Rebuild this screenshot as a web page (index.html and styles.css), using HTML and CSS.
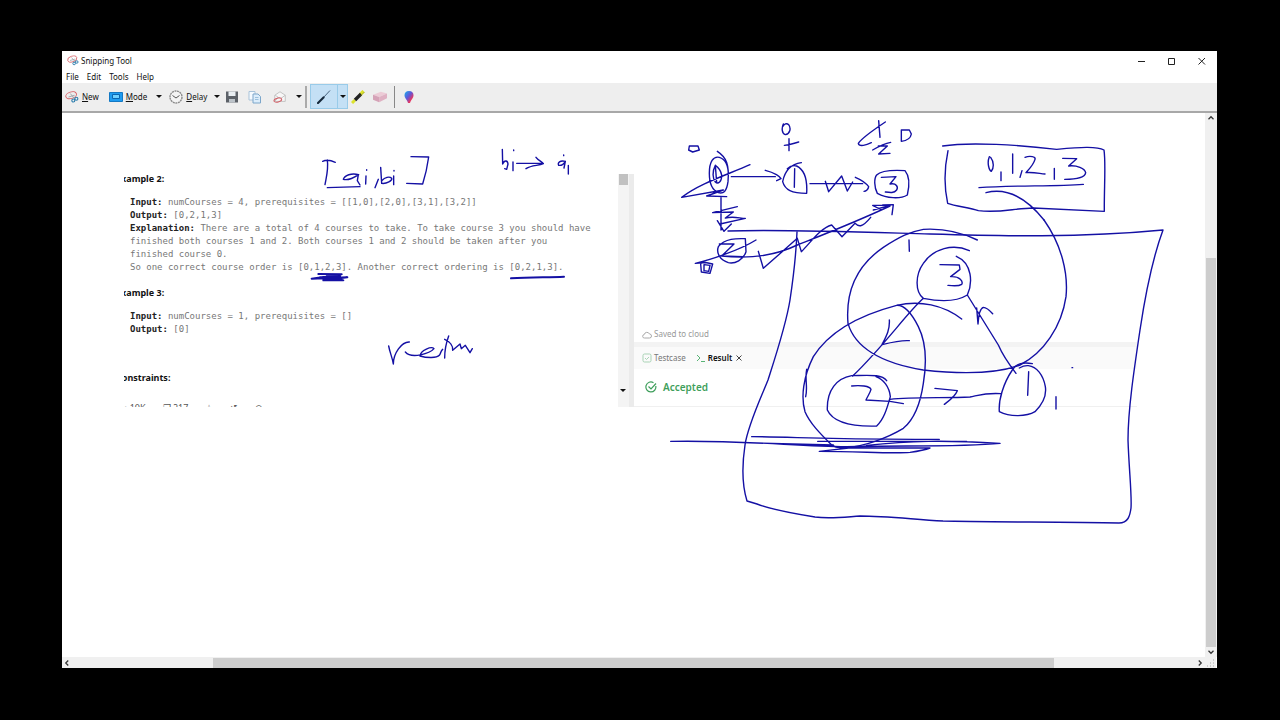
FILE: index.html
```html
<!DOCTYPE html>
<html lang="en">
<head>
<meta charset="utf-8">
<title>Snipping Tool</title>
<link rel="stylesheet" href="styles.css">
</head>
<body>
<svg class="defs" aria-hidden="true">
  <symbol id="scissors" viewBox="0 0 16 14">
    <ellipse cx="7" cy="5" rx="6.3" ry="3.8" transform="rotate(-18 7 5)" fill="none" stroke="#d8646a" stroke-width="1.1"/>
    <path d="M4 7l7-2M6 3l5 6" stroke="#9aa0a6" stroke-width="1" fill="none"/>
    <circle cx="9.500" cy="11" r="1.700" fill="none" stroke="#2f7fae" stroke-width="1.300"/>
    <circle cx="13" cy="9" r="1.700" fill="none" stroke="#2f7fae" stroke-width="1.300"/>
  </symbol>
</svg>
<div class="window">
  <header class="titlebar">
    <svg class="app-icon" viewBox="0 0 16 14"><use href="#scissors"/></svg>
    <h1 class="title">Snipping Tool</h1>
    <div class="window-controls">
      <button class="control" aria-label="Minimize"><svg viewBox="0 0 8 8"><path d="M0 4.500h7"/></svg></button>
      <button class="control" aria-label="Maximize"><svg viewBox="0 0 8 8"><path d="M.5 1.500h6v6h-6z"/></svg></button>
      <button class="control" aria-label="Close"><svg viewBox="0 0 8 8"><path d="M.5 1l6.500 6.500M7 1L.5 7.500"/></svg></button>
    </div>
  </header>
  <nav class="menubar" aria-label="Menu">
    <button class="menu">File</button><button class="menu">Edit</button><button class="menu">Tools</button><button class="menu">Help</button>
  </nav>
  <div class="toolbar" role="toolbar" aria-label="Tools">
    <button class="tool new"><svg class="icon" viewBox="0 0 16 14"><use href="#scissors"/></svg><span><u>N</u>ew</span></button>
    <button class="tool mode"><svg class="icon" viewBox="0 0 14 12"><path fill="#1e9bf0" stroke="#1479c4" d="M.5 1.500h13v9H.5z"/><path fill="#6fd0ff" stroke="#0b66b0" d="M3.500 3.500h7v4h-7z"/></svg><span><u>M</u>ode</span><i class="caret"></i></button>
    <button class="tool delay"><svg class="icon" viewBox="0 0 14 14"><circle cx="7" cy="7" r="6" fill="#f4f4f4" stroke="#8b8b8b" stroke-width="1.400" stroke-dasharray="2 .6"/><path d="M3.500 5.500L7 8l3.500-2.500" fill="none" stroke="#555"/></svg><span><u>D</u>elay</span><i class="caret"></i></button>
    <button class="tool save" aria-label="Save"><svg class="icon" viewBox="0 0 14 14"><path d="M1 1.500h12v11H1z" fill="#5c6168"/><path d="M3.500 1.500h7v4.500h-7z" fill="#e9eef2"/><path d="M4 9h6v3.500H4z" fill="#bcc3c9"/></svg></button>
    <button class="tool copy" aria-label="Copy"><svg class="icon" viewBox="0 0 14 14"><path d="M1 1.500h6v8.500H1z" fill="#f5faff" stroke="#a9c3da"/><path d="M5 4h5l2.500 2.500V13H5z" fill="#dcedfb" stroke="#7ca6ca"/><path d="M7 7.500h3.500M7 9.500h3.500" stroke="#9cc0dd"/></svg></button>
    <button class="tool send" aria-label="Send snip"><svg class="icon" viewBox="0 0 16 14"><path d="M2 5l6-4 6 4v7H2z" fill="#f7f7f7" stroke="#bbb"/><path d="M2.500 5l6 4L14 5M2 12l4-5" fill="none" stroke="#bbb"/><ellipse cx="5.500" cy="10.500" rx="4.500" ry="2.200" transform="rotate(-15 5.500 10.500)" fill="none" stroke="#d55e66" stroke-width="1.100"/></svg><i class="caret"></i></button>
    <span class="divider"></span>
    <div class="pen-group">
      <button class="pen" aria-label="Pen" aria-pressed="true"><svg class="icon" viewBox="0 0 14 14"><path d="M13 .5L6 8" stroke="#47627c" fill="none"/><path d="M6.500 7.500L1 13" stroke="#16283a" stroke-width="2.200" stroke-linecap="round"/></svg></button>
      <button class="pen-more" aria-label="Pen options"><i class="caret"></i></button>
    </div>
    <button class="tool marker" aria-label="Highlighter"><svg class="icon" viewBox="0 0 14 14"><path d="M12.500 1L9 4.500M4 10l-3 3" stroke="#dce22d" stroke-width="3"/><path d="M10 4L4 10" stroke="#222" stroke-width="3.400"/><path d="M13.500 2L10 5.500" stroke="#a4ab16"/></svg></button>
    <button class="tool eraser" aria-label="Eraser"><svg class="icon" viewBox="0 0 16 14"><path d="M0 4.500L9 1l7 2-9 4z" fill="#eccbd6"/><path d="M0 4.500L7 7v6L0 10z" fill="#d5a2b7"/><path d="M7 7l9-4v5.500L7 13z" fill="#dfb1c3"/></svg></button>
    <span class="divider thin"></span>
    <button class="tool paint" aria-label="Edit with Paint 3D"><svg class="icon" viewBox="0 0 10 14"><defs><linearGradient id="drop" x1="0" y1="0" x2="1" y2="1"><stop offset="0" stop-color="#12b3ee"/><stop offset=".45" stop-color="#6455d8"/><stop offset=".75" stop-color="#ed3659"/><stop offset="1" stop-color="#a646c4"/></linearGradient></defs><path d="M5 1C2 1 .5 3 .5 5.200.5 8 3 9.500 4 13h2c1-3.500 3.500-5 3.500-7.800C9.500 3 8 1 5 1z" fill="url(#drop)"/></svg></button>
  </div>
  <main class="workspace">
    <div class="canvas">
      <div class="snip">
        <section class="problem">
          <h2>Example 2:</h2>
          <pre class="sample"><b>Input:</b> numCourses = 4, prerequisites = [[1,0],[2,0],[3,1],[3,2]]
<b>Output:</b> [0,2,1,3]
<b>Explanation:</b> There are a total of 4 courses to take. To take course 3 you should have
finished both courses 1 and 2. Both courses 1 and 2 should be taken after you
finished course 0.
So one correct course order is [0,1,2,3]. Another correct ordering is [0,2,1,3].</pre>
          <h2 class="third">Example 3:</h2>
          <pre class="sample"><b>Input:</b> numCourses = 1, prerequisites = []
<b>Output:</b> [0]</pre>
          <h2 class="constraints">Constraints:</h2>
          <div class="stats"><span>• 10K</span><span>❐ 217</span><span>☆</span><span>↺</span><span>⊙</span></div>
        </section>
        <div class="snip-scroll"><span class="snip-thumb"></span><i class="caret"></i></div>
        <section class="judge">
          <div class="editor"><svg class="small-icon" viewBox="0 0 10 10"><path d="M2.500 8h5a2 2 0 0 0 0-4 2.800 2.800 0 0 0-5.300.6A1.700 1.700 0 0 0 2.500 8z" fill="none" stroke="#aaa"/></svg><span>Saved to cloud</span></div>
          <div class="results">
            <div class="tabs">
              <button class="tab"><svg class="small-icon" viewBox="0 0 10 10"><rect x="1" y="1" width="8" height="8" rx="1.500" fill="none" stroke="#a9d3b5"/><path d="M3 5l1.500 1.500L7 4" fill="none" stroke="#a9d3b5"/></svg>Testcase</button>
              <button class="tab active"><svg class="small-icon" viewBox="0 0 10 10"><path d="M1 2l3 3-3 3M5 8.500h4" fill="none" stroke="#58b475"/></svg>Result</button>
              <button class="tab-close" aria-label="Close result"><svg viewBox="0 0 6 6"><path d="M.5.5l5 5M5.500.5l-5 5" stroke="#444" fill="none"/></svg></button>
            </div>
            <div class="verdict"><svg viewBox="0 0 12 12"><path d="M10.800 5a5 5 0 1 1-2.300-3.300M3.500 5.500L6 8l5-5.500" fill="none" stroke="#3f9f5c" stroke-width="1.200"/></svg><strong>Accepted</strong></div>
          </div>
        </section>
      </div>
      <svg class="ink" viewBox="62 113 1144 545" aria-label="Pen drawing">
        <g class="large-frame"><path d="M728 231C780 229 860 232 930 234C1000 236 1080 238 1163 230C1150 265 1143 310 1140 330C1134 370 1128 410 1128 440C1129 470 1132 495 1131 508C1130 516 1128 523 1119 523C1060 522 980 522 943 521C910 519 885 516 860 516C845 517 830 519 815 517C790 513 770 509 757 504L747 501C742 485 742 465 745 445C748 425 760 400 768 380C776 355 786 325 790 300C793 280 796 255 797 232"/></g>
        <g transform="translate(110 140) scale(.333333)">
          <path d="M638 64C650 58 665 62 676 67M652 60C656 90 648 115 645 134M652 143L750 140M746 104C724 98 704 106 700 118C715 122 735 112 745 104L742 122L750 135M768 108L767 132M770 89v2M805 118L795 143M812 82L815 130C830 132 848 122 845 115C838 108 825 112 815 122M851 108V134M852 91v2M903 50L956 51C952 80 945 110 938 132L890 130"/>
          <path class="heavy" d="M625 402L695 403L605 416L712 412L640 421L700 421L650 405L690 408L630 412"/>
        </g>
        <g transform="translate(400 140) scale(.333333)">
          <path d="M307 28L308 72C314 58 323 62 324 72L320 88L314 86M339 66V92M341 30v2M350 70H430M408 52C415 62 428 66 430 71C415 78 395 74 378 86M496 64C480 60 472 68 476 76C486 77 492 72 496 64L492 84M505 76V102M491 45v2"/>
          <path class="heavy" d="M333 415C390 412 440 412 492 410"/>
        </g>
        <g transform="translate(110 270) scale(.333333)"><path d="M836 228C840 250 848 265 850 282C850 250 875 215 898 216M886 246C905 268 960 250 972 236C965 228 932 240 930 258C950 264 980 265 988 256C994 248 992 242 998 238M1016 198C1008 220 1004 240 1004 264M1004 208C1020 215 1030 228 1028 241L1050 222L1054 236L1066 226L1080 248L1087 236"/></g>
        <g transform="translate(660 110) scale(.333333)">
          <path d="M88 108L114 108L118 120L98 126L86 120ZM172 124C200 142 208 165 204 215C200 245 190 252 175 248C155 240 148 220 148 190C148 155 160 138 178 142C198 148 205 165 205 195M166 166C156 185 158 205 166 216C174 224 186 215 185 195C182 180 175 172 166 166L170 218M270 164C200 195 120 220 65 262L190 240L140 258L200 260M183 260V360M172 332L192 364L214 342M232 290L158 308L220 306L196 324C220 318 240 325 256 325L180 342"/>
          <path d="M214 200H346M316 181C345 188 360 200 363 206L350 212M424 158C395 162 375 180 368 215C375 240 395 250 440 250C442 215 435 180 410 168C400 165 390 168 382 176M404 176L403 232M370 42C364 55 366 72 376 74C390 72 394 55 386 44C380 38 372 42 368 50M373 106C390 106 405 98 416 96M387 86V122"/>
          <path d="M450 221H608M496 214L506 245L545 198L562 243L578 216M586 202C605 210 620 222 626 230C625 238 618 244 612 244M650 195C665 180 700 180 735 182C750 200 748 230 742 255C720 268 680 265 652 250C642 230 642 205 650 195M664 202L708 200L690 222C710 218 715 232 710 240C702 250 690 248 676 246M676 36C640 60 605 85 595 100C597 112 620 105 634 98M656 32L660 82M638 120C655 110 675 100 692 97M655 108H682L656 132L690 130M724 60V94C740 92 752 85 754 72L748 60Z"/>
          <path d="M185 438C290 450 360 430 412 405C500 370 590 335 690 288M295 424L310 475L412 385L424 425C450 400 480 355 515 345L546 380L585 340C595 350 605 355 632 322M640 300L690 286H638L665 300M668 285L700 284L696 314M175 410C195 385 230 385 256 386L258 425C250 450 225 462 205 458C180 450 168 430 175 410M178 402L222 402L185 438L250 440M288 390C240 420 150 450 106 460L140 458M122 462L124 486L150 490L158 462L130 456ZM132 464L150 466L146 484L132 482Z"/>
        </g>
        <g transform="translate(920 130) scale(.333333)"><path d="M68 48C150 35 300 45 410 58C480 52 530 48 552 60C558 100 552 180 553 244L340 234C280 235 240 250 175 242C150 232 110 230 83 220C72 170 74 110 84 62M208 80C200 100 208 122 214 124C222 115 222 95 212 82M243 126V152M278 72V130M306 122L300 142M315 82C330 76 348 80 345 88C340 105 325 120 318 128C340 126 355 130 375 132M403 115V148M428 85L470 86L446 108C470 105 495 115 497 128C495 145 460 148 434 148M177 173C280 165 400 170 490 163M198 188C260 172 320 205 372 270"/></g>
        <g transform="translate(780 220) scale(.333333)">
          <path d="M792 0C845 75 865 160 858 230C845 320 790 400 720 435C640 465 520 460 430 450C340 435 230 400 204 310C195 200 240 130 310 82C360 50 390 35 430 28C480 25 540 35 592 60M387 60L388 94M568 92C520 70 460 85 430 130C405 165 405 215 430 235C480 245 530 245 562 225C578 190 578 130 529 109M480 134L538 135L540 148L512 170C540 168 550 185 545 193C535 200 520 198 504 196M430 235C380 280 310 380 218 468M328 300C330 330 318 350 306 374C330 368 360 360 388 362M562 225L655 375C670 410 685 430 708 460M590 264L594 312C596 280 600 265 610 262C620 262 630 272 638 281"/>
          <path d="M545 297C490 255 420 240 350 256C240 285 150 330 100 410C70 470 62 530 75 575C90 610 120 640 155 675C165 682 180 685 200 682C250 680 320 655 370 625C400 600 420 560 430 490C440 430 440 370 415 320C395 280 375 255 350 256M80 448C74 480 84 500 77 530M320 482C305 462 270 466 215 467C170 475 140 510 142 570C160 610 220 620 290 618C310 600 320 570 331 530C328 500 310 478 288 470M215 498C240 495 270 498 273 508C270 520 262 530 258 540L330 544L370 551M330 538C400 530 500 535 570 531C600 525 620 518 662 521M465 505L532 512C525 530 510 540 493 553M757 431C725 425 705 435 697 450C670 490 655 540 658 575C690 592 740 590 765 575C790 550 800 525 796 500C790 465 770 440 745 437C735 436 725 440 718 444M746 455L743 526M828 530V567M876 443h2"/>
        </g>
        <g transform="translate(660 380) scale(.333333)"><path d="M32 184C250 180 400 198 560 200C700 195 900 202 1020 190C850 180 750 182 620 196M275 170C400 170 500 180 838 178M473 184H920M250 188L520 195M620 198L478 214C600 214 700 222 750 217C780 213 800 208 810 204H540"/></g>
      </svg>
    </div>
    <div class="scroll vertical"><svg class="arrow" viewBox="0 0 8 8"><path d="M2 5l2-2 2 2"/></svg><span class="thumb"></span><svg class="arrow" viewBox="0 0 8 8"><path d="M2 3l2 2 2-2"/></svg></div>
    <div class="scroll horizontal"><svg class="arrow" viewBox="0 0 8 8"><path d="M5 2L3 4l2 2"/></svg><span class="thumb"></span><svg class="arrow" viewBox="0 0 8 8"><path d="M3 2l2 2-2 2"/></svg></div>
    <svg class="grip" viewBox="0 0 11 11"><path d="M8 3h1M8 6h1M8 9h1M5 6h1M5 9h1M2 9h1" stroke="#aaa"/></svg>
  </main>
</div>
</body>
</html>
```
FILE: styles.css
```css
* { box-sizing: border-box; }
body {
  display: flex;
  min-height: 100vh;
  margin: 0;
  padding: 51px 63px 52px 62px;
  background: #000;
  color: #111;
  font: 8px/12px "Noto Sans", "Open Sans", sans-serif;
}
button { margin: 0; padding: 0; border: 0; background: none; color: inherit; font: inherit; }
h1, h2, pre { margin: 0; font-size: inherit; }
svg { display: block; flex: none; }
.defs { position: absolute; width: 0; height: 0; }
.window { display: flex; flex: 1; flex-direction: column; min-width: 0; background: #fff; }
.titlebar { display: flex; align-items: center; height: 19px; padding-left: 5px; }
.app-icon { width: 12px; height: 11px; }
.title { margin-left: 2px; font-weight: 400; }
.window-controls { display: flex; margin-left: auto; }
.control { display: grid; width: 30px; height: 19px; place-items: center; }
.control svg { width: 8px; height: 8px; fill: none; stroke: #222; }
.menubar { display: flex; gap: 8px; height: 13px; padding-left: 4px; }
.toolbar {
  display: flex;
  align-items: center;
  height: 30px;
  padding: 0 0 1px 3px;
  border-bottom: 2px solid #a8a8a8;
  background: #eee;
}
.tool { display: flex; align-items: center; gap: 3px; }
.icon { width: 14px; height: 14px; }
.caret { width: 6px; border: 3px solid transparent; border-top-color: #111; border-bottom: 0; }
.mode { margin-left: 10px; }
.mode .caret { margin-left: 6px; }
.delay .caret { margin-left: 4px; }
.delay { margin-left: 7px; }
.save { margin-left: 5px; }
.copy { margin-left: 9px; }
.send { margin-left: 11px; gap: 9px; }
.divider { width: 2px; height: 22px; margin: 0 3px; background: #aaa; }
.divider.thin { width: 1px; margin: 0 7px; background: #888; }
.pen-group { display: flex; height: 25px; border: 1px solid #99cbe9; background: #c4e0f5; }
.pen { display: grid; width: 26px; place-items: center; }
.pen-more { display: grid; width: 10px; place-items: center; border-left: 1px solid #99cbe9; }
.marker { margin-left: 3px; }
.eraser { margin-left: 8px; }
.workspace { display: grid; flex: 1; grid-template: minmax(0, 1fr) 11px / minmax(0, 1fr) 12px; }
.canvas { position: relative; overflow: hidden; }
.ink {
  position: absolute;
  top: 0;
  left: 0;
  width: 1144px;
  height: 545px;
  fill: none;
  stroke: #1410a4;
  stroke-linecap: round;
  stroke-linejoin: round;
}
.ink path { stroke-width: 1.4px; vector-effect: non-scaling-stroke; }
.ink .heavy { stroke-width: 2px; }
.snip { display: flex; max-width: 1075px; padding: 59px 0 0 62px; }
.problem { flex: 0 1 494px; overflow: hidden; font-size: 9px; line-height: 13px; }
.problem h2 { margin-left: -8px; font-weight: 700; }
.sample { margin: 11px 0 12px 6px; color: #777; font-family: "DejaVu Sans Mono", monospace; }
.sample b { color: #222; }
.problem .constraints { margin-top: 35px; }
.stats { display: flex; gap: 17px; height: 6px; margin-top: 17px; overflow: hidden; color: #555; }
.snip-scroll { display: flex; flex-direction: column; align-items: flex-start; justify-content: space-between; width: 16px; margin-top: 2px; padding-bottom: 15px; border-right: 5px solid #ebebeb; background: #f4f4f4; }
.snip-thumb { width: 9px; height: 11px; margin-left: 1px; background: #c1c1c1; }
.snip-scroll .caret { margin-left: 2px; }
.judge { display: flex; flex: 1; flex-direction: column; margin-top: 2px; color: #999; }
.editor { display: flex; flex: 1; align-items: flex-end; gap: 2px; padding: 0 8px 2px; }
.small-icon { width: 10px; height: 10px; }
.results { border-top: 5px solid #f3f3f3; }
.tabs { display: flex; align-items: center; gap: 10px; height: 22px; padding: 0 8px; background: #fafafa; }
.tab { display: flex; align-items: center; gap: 2px; color: #777; }
.active { color: #111; font-weight: 600; }
.tab-close { margin-left: -6px; }
.tab-close svg { width: 6px; height: 6px; }
.verdict { display: flex; align-items: center; gap: 6px; height: 38px; padding: 0 0 2px 11px; border-bottom: 1px solid #f0f0f0; color: #3f9f5c; font-size: 10px; }
.verdict svg { width: 12px; height: 12px; }
.verdict strong { font-weight: 600; }
.scroll { display: flex; align-items: center; background: #f0f0f0; }
.arrow { width: 10px; height: 10px; fill: none; stroke: #333; }
.thumb { background: #cdcdcd; }
.vertical { flex-direction: column; }
.vertical .thumb { flex: 385; width: 10px; }
.vertical .arrow:first-child { margin-bottom: 135px; }
.horizontal .thumb { flex: 840; height: 10px; }
.horizontal .arrow:first-child { margin-right: 141px; }
.horizontal .arrow:last-child { margin-left: 141px; }
.grip { width: 11px; height: 11px; background: #f0f0f0; }
```
